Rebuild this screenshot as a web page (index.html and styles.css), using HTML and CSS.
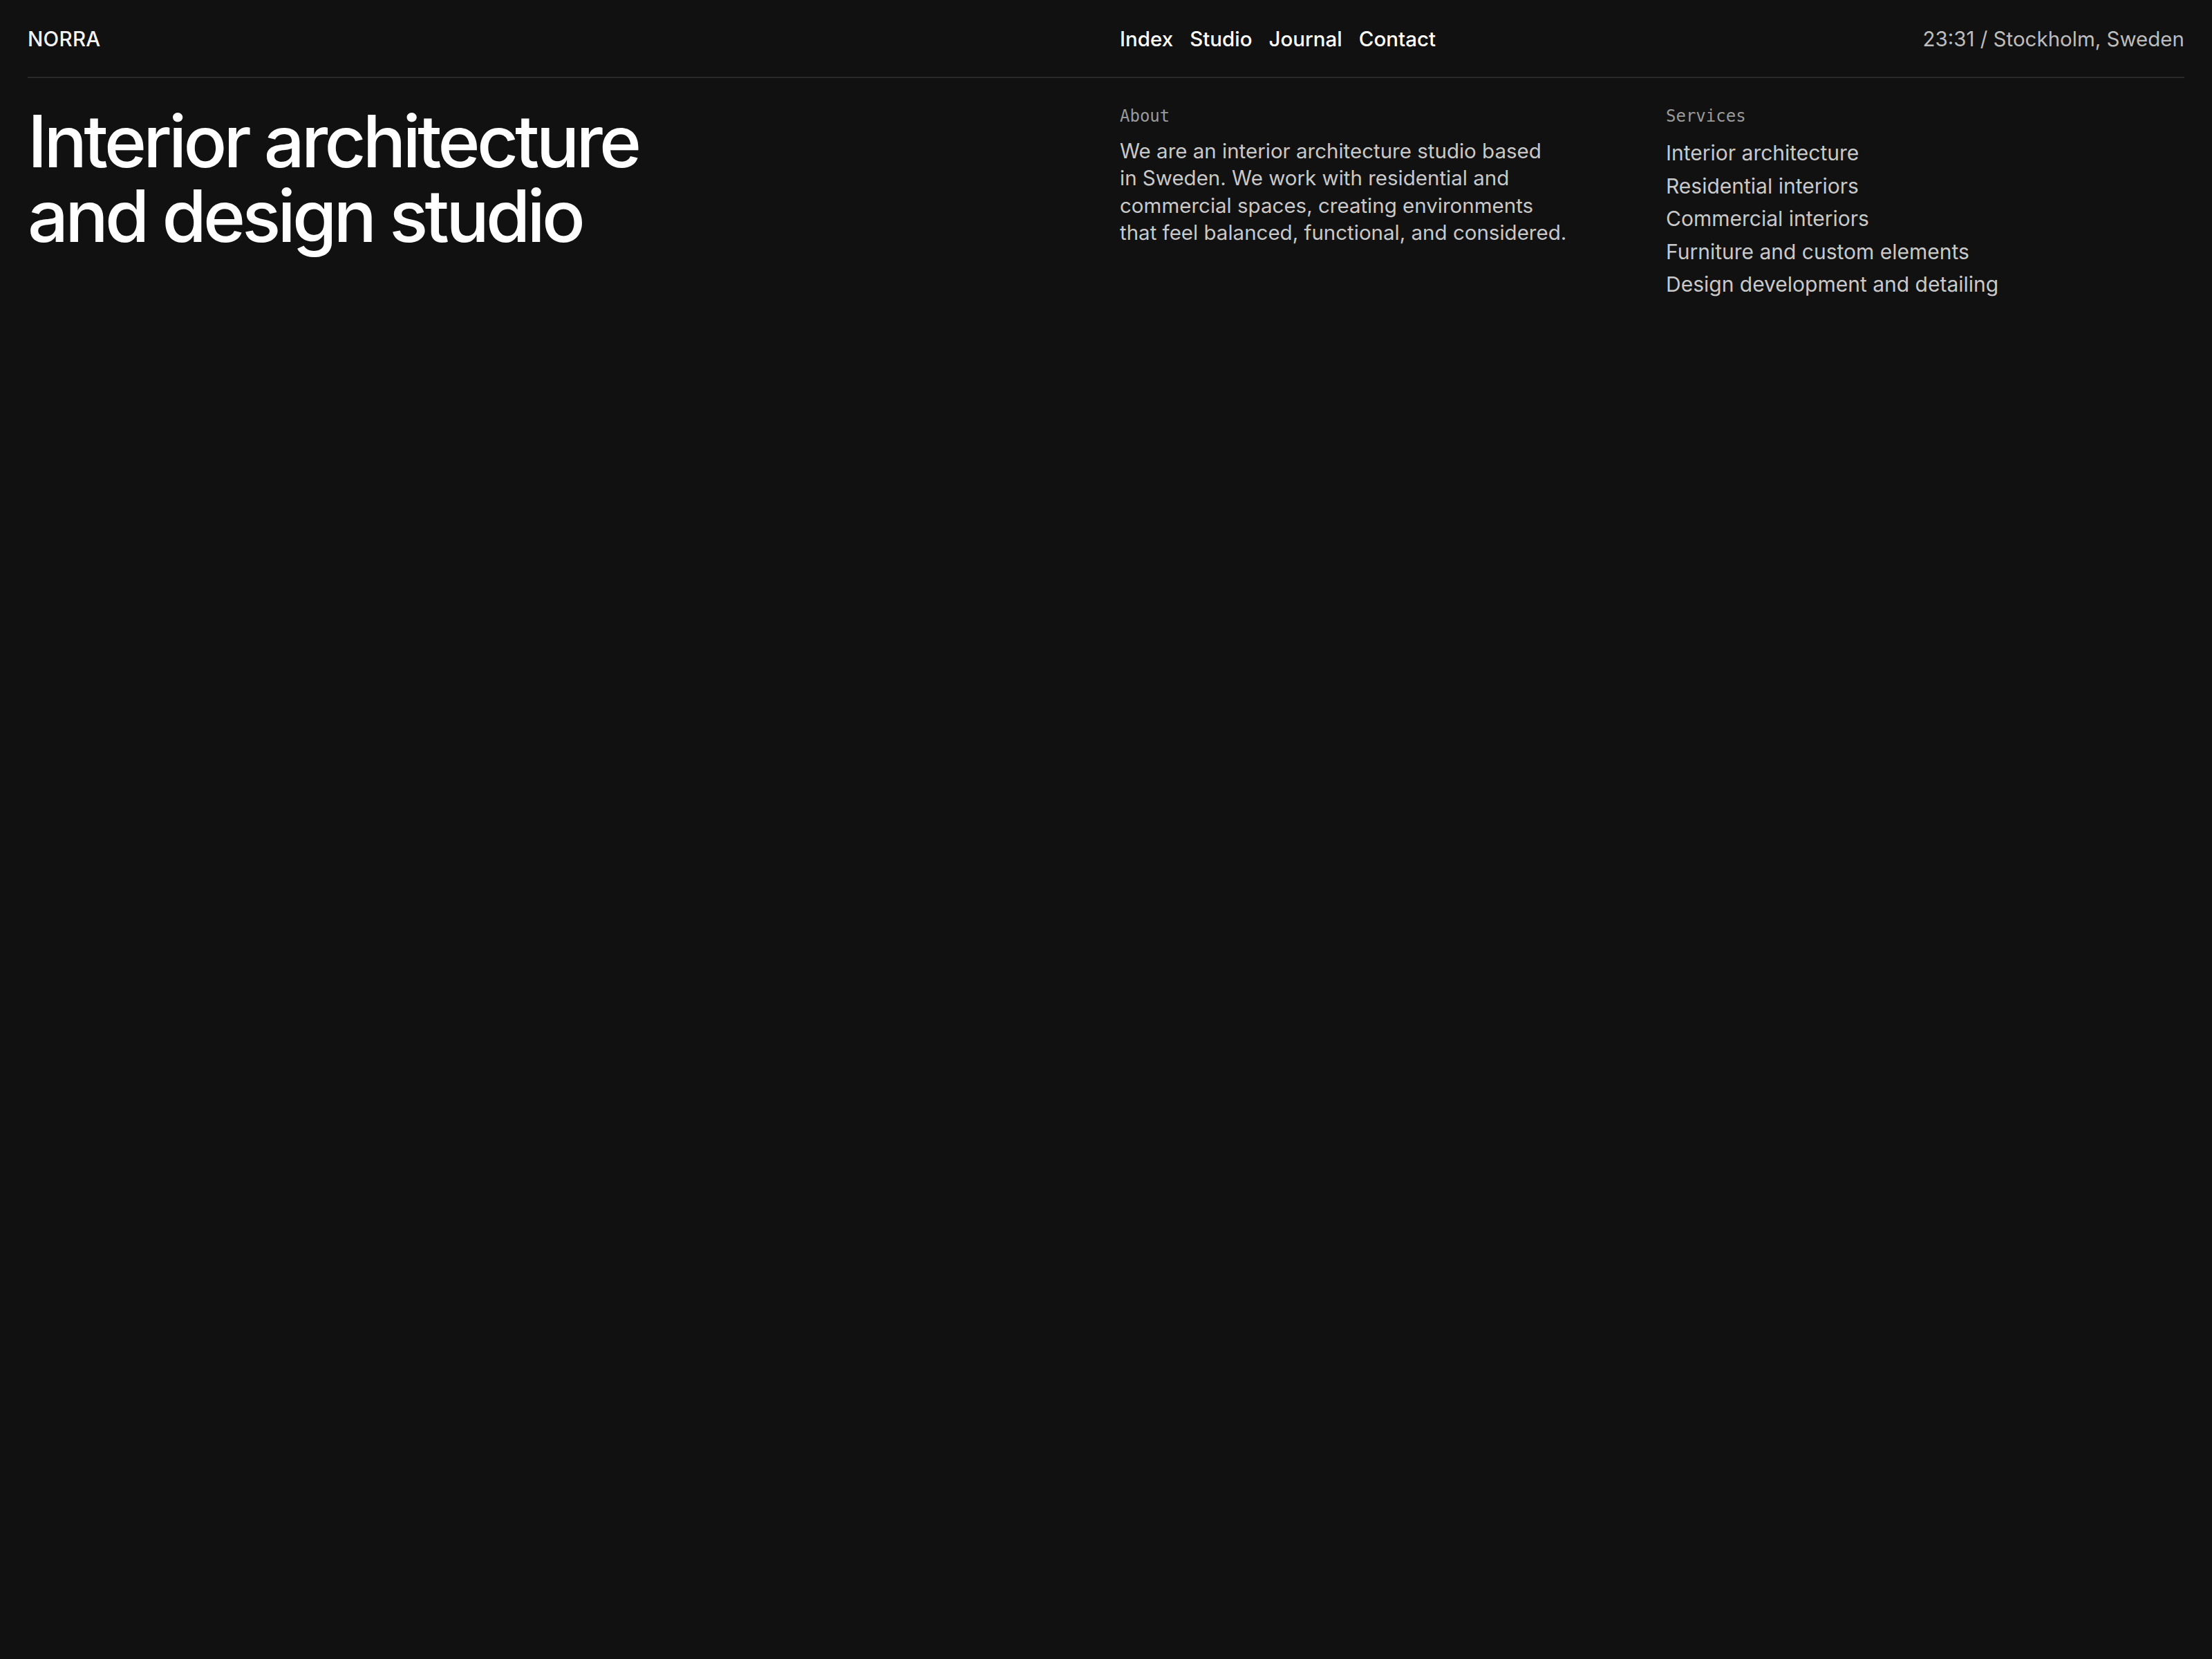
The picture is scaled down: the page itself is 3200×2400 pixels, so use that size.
FILE: index.html
```html
<!DOCTYPE html>
<html lang="en">
<head>
<meta charset="utf-8">
<title>NORRA — Interior architecture and design studio</title>
<link rel="stylesheet" href="styles.css">
</head>
<body>
<div class="page">
  <header class="topbar">
    <div class="brand">NORRA</div>
    <div class="spacer"></div>
    <nav class="nav">
      <a href="#">Index</a>
      <a href="#">Studio</a>
      <a href="#">Journal</a>
      <a href="#">Contact</a>
    </nav>
    <div class="clock">23:31 / Stockholm, Sweden</div>
  </header>
  <main class="hero">
    <h1 class="title">Interior architecture<br>and design studio</h1>
    <section class="about">
      <div class="label">About</div>
      <p class="about-text">We are an interior architecture studio based<br>in Sweden. We work with residential and<br>commercial spaces, creating environments<br>that feel balanced, functional, and considered.</p>
    </section>
    <section class="services">
      <div class="label">Services</div>
      <ul class="service-list">
        <li>Interior architecture</li>
        <li>Residential interiors</li>
        <li>Commercial interiors</li>
        <li>Furniture and custom elements</li>
        <li>Design development and detailing</li>
      </ul>
    </section>
  </main>
</div>
</body>
</html>
```

FILE: styles.css
```css
html, body {
  margin: 0;
  padding: 0;
  background: #111111;
}
body {
  font-family: Inter, Lato, "Noto Sans", sans-serif;
  color: #f4f4f4;
  min-height: 2400px;
}
.page {
  padding: 0 40px;
}
.topbar {
  display: grid;
  grid-template-columns: repeat(4, 1fr);
  column-gap: 40px;
  align-items: center;
  height: 111px;
  border-bottom: 2px solid #2a2a2a;
  font-size: 29.5px;
}
.brand {
  font-weight: 500;
  letter-spacing: 0.01em;
}
.nav {
  display: flex;
  gap: 24px;
}
.nav a {
  color: #ffffff;
  text-decoration: none;
  font-weight: 500;
}
.clock {
  text-align: right;
  color: #bdbdbd;
}
.hero {
  display: grid;
  grid-template-columns: repeat(4, 1fr);
  column-gap: 40px;
  padding-top: 37px;
}
.title {
  grid-column: 1 / 3;
  margin: 0;
  font-size: 104px;
  line-height: 108px;
  font-weight: 500;
  letter-spacing: -0.046em;
  color: #ffffff;
}
.about {
  grid-column: 3;
  padding-top: 3px;
}
.services {
  grid-column: 4;
  padding-top: 3px;
}
.label {
  font-family: "DejaVu Sans Mono", "Liberation Mono", monospace;
  font-size: 24px;
  color: #9a9a9a;
  line-height: 30px;
}
.about-text {
  margin: 16px 0 0;
  font-size: 29.5px;
  line-height: 39.4px;
  color: #c9c9c9;
}
.service-list {
  list-style: none;
  margin: 18px 0 0;
  padding: 0;
  display: flex;
  flex-direction: column;
  gap: 7.5px;
  font-size: 30px;
  line-height: 40px;
  color: #c9c9c9;
}
```
